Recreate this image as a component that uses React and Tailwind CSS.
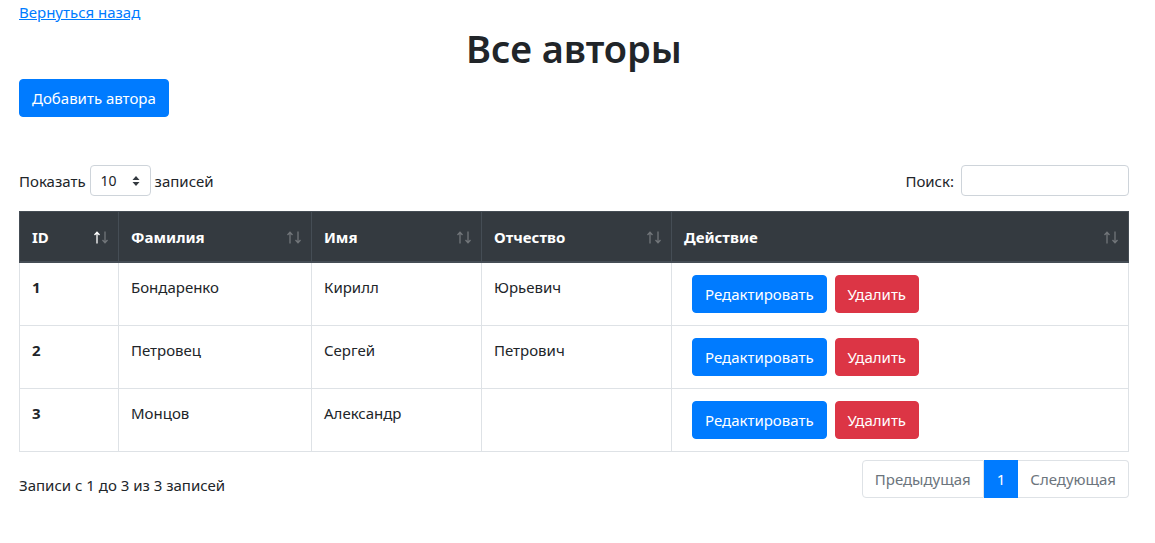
import React from 'react';

const rows = [
  { id: 1, last: 'Бондаренко', first: 'Кирилл', middle: 'Юрьевич' },
  { id: 2, last: 'Петровец', first: 'Сергей', middle: 'Петрович' },
  { id: 3, last: 'Монцов', first: 'Александр', middle: '' },
];

// DataTables-style sort indicator: up arrow + down arrow
const SortArrows = ({ active }) => (
  <svg width="14" height="13" viewBox="0 0 14 13" className="shrink-0">
    <g stroke={active ? '#ffffff' : 'rgba(255,255,255,0.3)'} fill="none" strokeWidth="1.3">
      <path d="M3 12.5 V1.5 M0.5 4 L3 1.2 L5.5 4" />
    </g>
    <g stroke="rgba(255,255,255,0.3)" fill="none" strokeWidth="1.3">
      <path d="M11 0.5 V11.5 M8.5 9 L11 11.8 L13.5 9" />
    </g>
  </svg>
);

const Th = ({ children, width, active }) => (
  <th className={`${width} border border-[#454d55] border-b-2 pl-3 pr-[10px] pt-[13px] pb-3 text-left font-bold`}>
    <div className="flex items-center justify-between">
      <span>{children}</span>
      <SortArrows active={active} />
    </div>
  </th>
);

export default function App() {
  return (
    <div className="font-['Noto_Sans',sans-serif] text-[15px] leading-6 text-[#212529] bg-white min-h-[543px] px-[19px]">
      <div className="w-[1110px]">
        <a href="#" className="text-[#007bff] underline">Вернуться назад</a>
        <h1 className="text-center text-[38px] leading-[48px] font-semibold mb-[7px]">Все авторы</h1>
        <button className="bg-[#007bff] text-white rounded px-3 py-[6px] border border-[#007bff]">
          Добавить автора
        </button>

        {/* length + search */}
        <div className="flex items-center justify-between mt-12">
          <label className="flex items-center">
            Показать
            <span className="mx-1 w-[61px] h-[31px] border border-[#ced4da] rounded flex items-center justify-between pl-[10px] pr-[10px] text-[14px]">
              10
              <svg width="8" height="12" viewBox="0 0 8 12">
                <path d="M4 1 L7.5 5 H0.5 Z M4 11 L7.5 7 H0.5 Z" fill="#343a40" />
              </svg>
            </span>
            записей
          </label>
          <label className="flex items-center">
            Поиск:
            <span className="ml-[7px] w-[168px] h-[31px] border border-[#ced4da] rounded" />
          </label>
        </div>

        <table className="w-full mt-[15px] border-collapse">
          <thead className="bg-[#343a40] text-white">
            <tr>
              <Th width="w-[99px]" active>ID</Th>
              <Th width="w-[193px]">Фамилия</Th>
              <Th width="w-[170px]">Имя</Th>
              <Th width="w-[190px]">Отчество</Th>
              <Th>Действие</Th>
            </tr>
          </thead>
          <tbody>
            {rows.map((r) => (
              <tr key={r.id}>
                <td className="border border-[#dee2e6] px-3 py-3 align-top font-bold">{r.id}</td>
                <td className="border border-[#dee2e6] px-3 py-3 align-top">{r.last}</td>
                <td className="border border-[#dee2e6] px-3 py-3 align-top">{r.first}</td>
                <td className="border border-[#dee2e6] px-3 py-3 align-top">{r.middle}</td>
                <td className="border border-[#dee2e6] px-3 py-3 align-top">
                  <div className="flex gap-2 pl-2">
                    <button className="bg-[#007bff] text-white rounded px-3 h-[38px] border border-[#007bff]">
                      Редактировать
                    </button>
                    <button className="bg-[#dc3545] text-white rounded px-3 h-[38px] border border-[#dc3545]">
                      Удалить
                    </button>
                  </div>
                </td>
              </tr>
            ))}
          </tbody>
        </table>

        <div className="flex justify-between items-start mt-[8px]">
          <div className="pt-[13px]">Записи с 1 до 3 из 3 записей</div>
          <div className="flex leading-5">
            <span className="px-3 py-2 border border-[#dee2e6] rounded-l text-[#6c757d]">Предыдущая</span>
            <span className="px-3 py-2 border border-[#007bff] bg-[#007bff] text-white">1</span>
            <span className="px-3 py-2 border border-[#dee2e6] border-l-0 rounded-r text-[#6c757d]">Следующая</span>
          </div>
        </div>
      </div>
    </div>
  );
}
